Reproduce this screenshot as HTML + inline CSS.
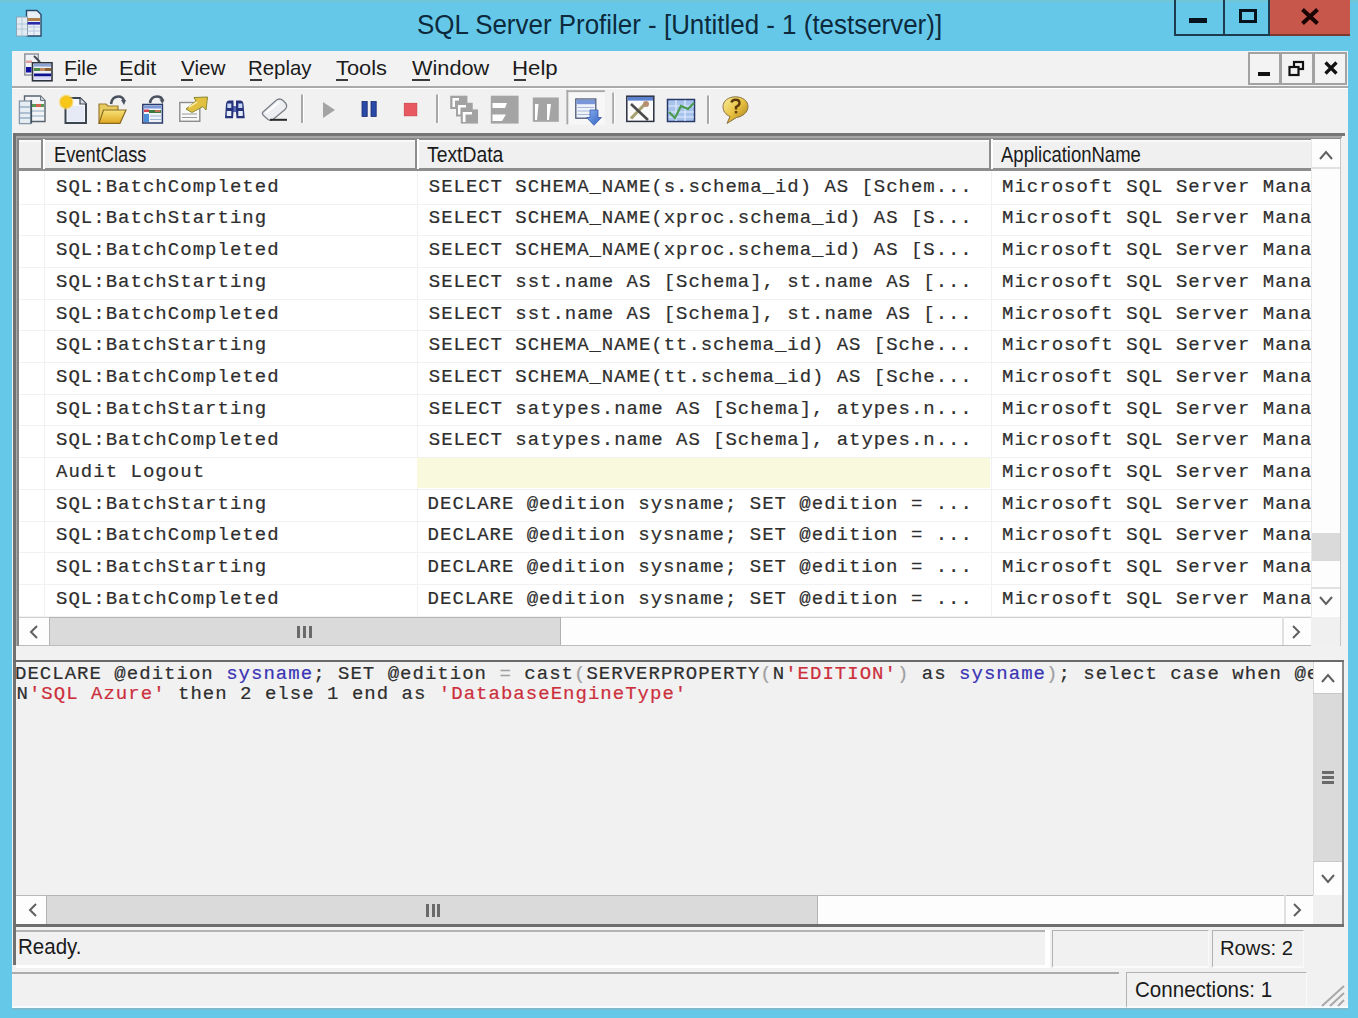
<!DOCTYPE html>
<html><head><meta charset="utf-8">
<style>
*{margin:0;padding:0;box-sizing:border-box}
html,body{width:1358px;height:1018px;overflow:hidden}
body{background:#66c8e9;font-family:"Liberation Sans",sans-serif;position:relative}
.a{position:absolute}
.t{white-space:pre;line-height:1;transform-origin:0 0;font-family:"Liberation Sans",sans-serif}
.mono{position:absolute;white-space:pre;line-height:1;font-family:"Liberation Mono",monospace;font-size:19px;letter-spacing:1.02px;color:#2e2e2e;-webkit-text-stroke-width:0.2px}
.kw{color:#3a34b4}.st{color:#cc2f3c}.gy{color:#a0a0a0}
.btn3d{position:absolute;background:#f4f4f4}
</style></head><body>

<div class="a t" style="left:416.78px;top:9.82px;font-size:28.20px;color:#0c2a3c;transform:scaleX(0.9201);">SQL Server Profiler - [Untitled - 1 (testserver)]</div>
<div class="a" style="left:0;top:0;width:1358px;height:1.5px;background:#70c6d6"></div>
<div class="a" style="left:1174px;top:0;width:51px;height:36px;border:2px solid #1d3c50;border-top:none;border-right:none"></div>
<div class="a" style="left:1223px;top:0;width:47px;height:36px;border:2px solid #1d3c50;border-top:none"></div>
<div class="a" style="left:1189px;top:18px;width:18px;height:5px;background:#06121c"></div>
<div class="a" style="left:1239px;top:9px;width:18px;height:14px;border:3.5px solid #06121c"></div>
<div class="a" style="left:1270px;top:0;width:80px;height:36px;background:#c8574b;border-bottom:2px solid #7a3a30"></div>
<svg class="a" style="left:1300px;top:8px" width="20" height="17" viewBox="0 0 20 17"><path d="M2.5 1.5 L17.5 15.5 M17.5 1.5 L2.5 15.5" stroke="#1a0505" stroke-width="4"/></svg>
<div class="a" style="left:12px;top:51px;width:1336px;height:957px;background:#f1f1f1"></div>
<div class="a" style="left:12px;top:1006px;width:1336px;height:2px;background:#f6fcfe"></div>
<div class="a" style="left:12px;top:1008px;width:1336px;height:2px;background:#7cbacd"></div>
<div class="a" style="left:12px;top:51px;width:1336px;height:35px;background:#f2f2f2"></div>
<div class="a" style="left:12px;top:86px;width:1336px;height:1.6px;background:#a9a9a9"></div>
<div class="a" style="left:12px;top:88px;width:1336px;height:1px;background:#ffffff"></div>
<div class="a t" style="left:63.71px;top:58.08px;font-size:20.93px;color:#1b1b1b;transform:scaleX(0.9968);">File</div>
<div class="a t" style="left:119.24px;top:58.08px;font-size:20.93px;color:#1b1b1b;transform:scaleX(1.0324);">Edit</div>
<div class="a t" style="left:181.00px;top:58.08px;font-size:20.93px;color:#1b1b1b;transform:scaleX(0.9889);">View</div>
<div class="a t" style="left:248.05px;top:58.08px;font-size:20.93px;color:#1b1b1b;transform:scaleX(0.9746);">Replay</div>
<div class="a t" style="left:336.40px;top:58.08px;font-size:20.93px;color:#1b1b1b;transform:scaleX(1.0438);">Tools</div>
<div class="a t" style="left:412.30px;top:58.08px;font-size:20.93px;color:#1b1b1b;transform:scaleX(1.0378);">Window</div>
<div class="a t" style="left:512.08px;top:58.08px;font-size:20.93px;color:#1b1b1b;transform:scaleX(1.0625);">Help</div>
<div class="a" style="left:66px;top:79px;width:11px;height:2px;background:#3a3a3a"></div>
<div class="a" style="left:121px;top:79px;width:11px;height:2px;background:#3a3a3a"></div>
<div class="a" style="left:181px;top:79px;width:12px;height:2px;background:#3a3a3a"></div>
<div class="a" style="left:250px;top:79px;width:12px;height:2px;background:#3a3a3a"></div>
<div class="a" style="left:336px;top:79px;width:12px;height:2px;background:#3a3a3a"></div>
<div class="a" style="left:412px;top:79px;width:18px;height:2px;background:#3a3a3a"></div>
<div class="a" style="left:514px;top:79px;width:12px;height:2px;background:#3a3a3a"></div>
<div class="a" style="left:1248px;top:52px;width:33px;height:33px;background:#f3f3f3;border:2px solid #a2a2a2"></div>
<div class="a" style="left:1280px;top:52px;width:34px;height:33px;background:#f3f3f3;border:2px solid #a2a2a2"></div>
<div class="a" style="left:1313px;top:52px;width:34px;height:33px;background:#f3f3f3;border:2px solid #a2a2a2"></div>
<div class="a" style="left:1258px;top:72px;width:12px;height:4px;background:#111"></div>
<svg class="a" style="left:1287px;top:60px" width="20" height="18" viewBox="0 0 20 18"><rect x="7" y="2" width="9" height="7" fill="none" stroke="#111" stroke-width="2.2"/><rect x="2.5" y="7" width="9" height="8" fill="#f3f3f3" stroke="#111" stroke-width="2.2"/></svg>
<svg class="a" style="left:1320px;top:60px" width="20" height="16" viewBox="0 0 20 16"><path d="M5.5 2.5 L16.5 13.5 M16.5 2.5 L5.5 13.5" stroke="#111" stroke-width="3.2"/></svg>
<svg class="a" style="left:0;top:0" width="760" height="132" viewBox="0 0 760 132">
<defs>
<linearGradient id="gfold" x1="0" y1="0" x2="0" y2="1"><stop offset="0" stop-color="#f6e27a"/><stop offset="1" stop-color="#e0a820"/></linearGradient>
<linearGradient id="gbub" x1="0" y1="0" x2="1" y2="1"><stop offset="0" stop-color="#f8f0a0"/><stop offset="0.5" stop-color="#e8c040"/><stop offset="1" stop-color="#a07818"/></linearGradient>
<radialGradient id="gstar"><stop offset="0" stop-color="#ffd000"/><stop offset="0.7" stop-color="#f5c020"/><stop offset="1" stop-color="#f8e890" stop-opacity="0.3"/></radialGradient>
<linearGradient id="garr" x1="0" y1="0" x2="1" y2="1"><stop offset="0" stop-color="#8ab0f0"/><stop offset="1" stop-color="#3060c0"/></linearGradient>
<linearGradient id="gtitle" x1="0" y1="0" x2="1" y2="1"><stop offset="0" stop-color="#ffffff"/><stop offset="1" stop-color="#c8d4e0"/></linearGradient>
</defs>
<!-- title icon -->
<path d="M26.5 10.5 H37 L41 14.5 V36 H26.5 Z" fill="#e8f0f6" stroke="#2a4868" stroke-width="1.4"/>
<rect x="16.5" y="17" width="11" height="19" fill="#e2ebf2" stroke="#8aa4b8" stroke-width="1"/>
<path d="M17 24 H27 M17 29 H27 M22 18 V35" stroke="#a8c0d0" stroke-width="0.8"/>
<rect x="27.5" y="18" width="12.5" height="3" fill="#b08048"/>
<rect x="27.5" y="22" width="12.5" height="2.6" fill="#2a2aa8"/>
<path d="M28 27 H40 M28 31 H40 M34 25 V35" stroke="#b8c8e0" stroke-width="1"/>
<!-- menu icon -->
<rect x="24.8" y="54" width="13.5" height="21" fill="#f0f2f4" stroke="#8a9098" stroke-width="1.4"/>
<rect x="26" y="60.5" width="6" height="2.5" fill="#e0a0a0"/>
<rect x="26" y="67" width="5.5" height="5.5" fill="#1010a0"/>
<path d="M34 56 L40 62" stroke="#404850" stroke-width="2"/>
<rect x="32.5" y="62.8" width="19.5" height="18" fill="#eef0f8" stroke="#30343c" stroke-width="1.6"/>
<rect x="33.5" y="63.6" width="17.5" height="3" fill="#8ea4d0"/>
<rect x="34" y="68" width="6" height="3" fill="#4a8a40"/><rect x="40" y="68" width="5" height="3" fill="#c08860"/><rect x="45" y="68" width="6" height="3" fill="#8a6030"/>
<rect x="34" y="73.5" width="17" height="2.8" fill="#101090"/>
<rect x="34" y="77" width="17" height="2.5" fill="#d8d8f8"/>
<!-- tb1 -->
<path d="M24.5 96 H40.5 L45 100.5 V121.5 H24.5 Z" fill="#f2f4f6" stroke="#5a6470" stroke-width="1.4"/>
<path d="M40.5 96 V100.5 H45" fill="#c8d0d8" stroke="#6a7480" stroke-width="1"/>
<rect x="30" y="104" width="14" height="3" fill="#5a9a50"/><rect x="36" y="104" width="5" height="3" fill="#d86050"/>
<path d="M31 111 H44 M31 116 H44" stroke="#90a8c0" stroke-width="1.2"/>
<rect x="19.4" y="101" width="11.4" height="22.6" fill="#e6eef4" stroke="#8898a8" stroke-width="1.3"/>
<path d="M20 107 H30 M20 113 H30 M20 118 H30" stroke="#98b0c4" stroke-width="1.3"/>
<rect x="30.5" y="100" width="1.6" height="23.5" fill="#40505c"/>
<!-- tb2 new -->
<path d="M65.5 98 H80 L86 104 V123 H65.5 Z" fill="#f6f8fc" stroke="#3c4650" stroke-width="2"/>
<path d="M80 98 V104 H86" fill="#d8dde4" stroke="#3c4650" stroke-width="1.2"/>
<rect x="67.5" y="106" width="16.5" height="15.5" fill="#e6eaf6"/>
<circle cx="66.2" cy="102" r="7.8" fill="url(#gstar)"/>
<path d="M66.2 95 L67.6 99.5 L72.5 98.5 L69 102 L72.5 105.5 L67.6 104.5 L66.2 109 L64.8 104.5 L60 105.5 L63.4 102 L60 98.5 L64.8 99.5 Z" fill="#f8c818"/>
<!-- tb3 folder -->
<path d="M111 104 Q112 96.5 118.5 96.5 Q123 96.5 124 101" fill="none" stroke="#4a5260" stroke-width="2.6"/>
<path d="M121 100 L126 100 L124 105 Z" fill="#4a5260"/>
<path d="M99 104 H106 L108 106 H118 V123 H99 Z" fill="#e8cc60" stroke="#9a7a30" stroke-width="1.2"/>
<path d="M103.5 110 H126 L120 123.3 H99 Z" fill="url(#gfold)" stroke="#8a6a20" stroke-width="1.2"/>
<!-- tb4 doc arrow -->
<path d="M150 103 Q151 96.5 157 96.5 Q161.5 96.5 162.5 100" fill="none" stroke="#4a5260" stroke-width="2.6"/>
<path d="M159.5 99.5 L164.5 99.5 L162.5 104 Z" fill="#4a5260"/>
<rect x="142.8" y="104.5" width="19.6" height="18.5" fill="#f0f2f8" stroke="#2a3a6a" stroke-width="1.5"/>
<rect x="144" y="105.5" width="17.5" height="3" fill="#7a98d8"/>
<rect x="144" y="109.5" width="5" height="2.5" fill="#d04050"/><rect x="149" y="110" width="12" height="3" fill="#3a7a40"/><rect x="155" y="110" width="5" height="2" fill="#c07050"/>
<rect x="144" y="114" width="5" height="8" fill="#4a90d8"/>
<path d="M150 116 H161 M150 119.5 H161" stroke="#a0b8d8" stroke-width="1.2"/>
<!-- tb5 export -->
<rect x="179.8" y="102.5" width="20" height="18.8" fill="#f8f8f8" stroke="#8c8c8c" stroke-width="1.4"/>
<path d="M182 114 H197 M182 117.5 H197" stroke="#9a9a9a" stroke-width="1.2"/>
<path d="M186 109 L196 101 L194 97.5 L207.5 97 L206 110 L203 106.5 L192 112.5 Z" fill="#e2c040" stroke="#8a8a30" stroke-width="1"/>
<path d="M189 107 L197 102" stroke="#f8e8a0" stroke-width="1.5"/>
<!-- tb6 binoculars -->
<path d="M225 118.3 L226 104 Q226.5 100.6 229.5 100.6 H233.5 V106 H236 V100.6 H240 Q243 100.6 243.5 104 L244.7 118.3 H236.5 L236 112 H233.5 L233 118.3 Z" fill="#26337a"/>
<rect x="227.3" y="103.5" width="4" height="4.5" fill="#c8d8f4"/><rect x="238.3" y="103.5" width="4" height="4.5" fill="#c8d8f4"/>
<rect x="226.8" y="111" width="4.5" height="5" fill="#e4ecfc"/><rect x="238.3" y="111" width="4.5" height="5" fill="#e4ecfc"/>
<rect x="233.5" y="106" width="2.5" height="6" fill="#5a6ab8"/>
<!-- tb7 eraser -->
<path d="M263 112 L276 100.5 Q279.5 97.5 283 100.5 L285.5 103 Q288 106.5 285 109.5 L273 119.5 Q270.5 121 268 119.5 L263.5 115.5 Q261.5 113.5 263 112 Z" fill="#eceef2" stroke="#7a7e86" stroke-width="1.3"/>
<path d="M266 113 L279 102" stroke="#ffffff" stroke-width="2"/>
<path d="M270 119.8 H287" stroke="#2a2a2a" stroke-width="2"/>
<!-- seps -->
<rect x="301" y="94.5" width="2" height="28.5" fill="#a8a8a8"/><rect x="303" y="94.5" width="1" height="28.5" fill="#fff"/>
<rect x="436" y="94.5" width="2" height="28.5" fill="#a8a8a8"/><rect x="438" y="94.5" width="1" height="28.5" fill="#fff"/>
<rect x="612.2" y="92.6" width="2" height="31" fill="#a8a8a8"/><rect x="614.2" y="92.6" width="1" height="31" fill="#fff"/>
<rect x="707" y="95.5" width="2" height="28.3" fill="#a8a8a8"/><rect x="709" y="95.5" width="1" height="28.3" fill="#fff"/>
<!-- play pause stop -->
<path d="M323 102 L335 110 L323 118 Z" fill="#a4a4a4"/>
<rect x="362" y="101.5" width="5.2" height="15" fill="#2a4aa8" stroke="#1a2a70" stroke-width="0.8"/>
<rect x="371" y="101.5" width="5.2" height="15" fill="#2a4aa8" stroke="#1a2a70" stroke-width="0.8"/>
<rect x="404.3" y="103.3" width="12.5" height="12.5" fill="#e85860" stroke="#d04048" stroke-width="0.8"/>
<!-- cascade -->
<rect x="450.2" y="95.7" width="17.2" height="13.3" fill="#a2a2a2"/><path d="M452.5 98 H459 V100.5 H455 V107 H452.5 Z" fill="#fff"/>
<rect x="456" y="102.8" width="16.7" height="13.7" fill="#a2a2a2"/><path d="M458 105 H466 V107.5 H460.5 V114.5 H458 Z" fill="#fff"/>
<rect x="460.8" y="109.4" width="17.2" height="14.2" fill="#a2a2a2"/><path d="M462.8 112 H472 V114.5 H465.5 V122 H462.8 Z" fill="#fff"/>
<!-- tile h -->
<rect x="490.8" y="95.7" width="27.8" height="27.9" fill="#a4a4a4"/>
<path d="M492.5 103 H507 L505 108 H492.5 Z" fill="#fff"/>
<path d="M492.5 114.5 H506 L502 121 H492.5 Z" fill="#fff"/>
<!-- tile v -->
<rect x="532.8" y="97.5" width="26" height="24.3" fill="#a4a4a4"/>
<path d="M535 104 H538.5 L537 120 H535 Z" fill="#fff"/>
<path d="M547 104 H551 L549 120 H547 Z" fill="#fff"/>
<!-- pressed btn -->
<rect x="566.4" y="90.2" width="38.5" height="34.5" fill="#f7f7f7"/>
<rect x="566.4" y="90.2" width="38.5" height="1.9" fill="#a8a8a8"/>
<rect x="566.4" y="90.2" width="1.9" height="34.2" fill="#a8a8a8"/>
<rect x="575.8" y="99" width="20" height="19.2" fill="#eef2fa" stroke="#404a68" stroke-width="1.2"/>
<rect x="576.4" y="99.6" width="18.8" height="4.6" fill="#7896d8"/>
<path d="M577.5 107.5 H594 M577.5 111 H594 M577.5 114.5 H594" stroke="#a8b8d8" stroke-width="1"/>
<path d="M590 110 H598 V117.5 H601.5 L594 125.3 L586.5 117.5 H590 Z" fill="url(#garr)" stroke="#3a5ab0" stroke-width="0.8"/>
<!-- tools -->
<rect x="626.8" y="96.2" width="27" height="25.2" fill="#fafafa" stroke="#2a3040" stroke-width="1.5"/>
<rect x="627.6" y="97" width="25.4" height="3.6" fill="#5a80d0"/>
<path d="M631 118.5 L645 104" stroke="#a8a070" stroke-width="3.2"/>
<circle cx="646" cy="104" r="3" fill="#b89070"/>
<path d="M631 104 L648 120" stroke="#4a4a4a" stroke-width="2.6"/>
<!-- chart -->
<rect x="667.5" y="99.5" width="27" height="22" fill="#a8c4ec" stroke="#283868" stroke-width="1.5"/>
<path d="M668.5 106 H694 M668.5 112 H694 M668.5 117 H694 M676 100 V121 M685 100 V121" stroke="#e0ecff" stroke-width="1.2"/>
<path d="M669 112 L675 118 L681 106 L688 109 L694 103" fill="none" stroke="#4a9a50" stroke-width="2.2"/>
<!-- help -->
<path d="M735.5 96.8 C742.5 96.8 748 101 748 106.5 C748 112 743 116.5 736.5 117.5 L727 123.4 L730 116.5 C725.5 114.5 723 111 723 106.5 C723 101 728.5 96.8 735.5 96.8 Z" fill="url(#gbub)" stroke="#8a7040" stroke-width="1"/>
<path d="M731.5 102.5 Q732 99.8 735.5 99.8 Q739.5 99.8 739.5 103 Q739.5 105.5 736 107 V109.5" fill="none" stroke="#5a3a08" stroke-width="2.4"/>
<rect x="734.7" y="111" width="2.6" height="2.4" fill="#6a4010"/>
</svg>
<div class="a" style="left:14px;top:133px;width:1327px;height:513px;background:#ffffff"></div>
<div class="a" style="left:12.5px;top:132.8px;width:1332px;height:3.2px;background:#767676"></div>
<div class="a" style="left:15.5px;top:136px;width:1326px;height:2px;background:#a6a6a6"></div>
<div class="a" style="left:16.8px;top:138px;width:1324px;height:1.5px;background:#8a8a8a"></div>
<div class="a" style="left:12.5px;top:132.8px;width:3px;height:832px;background:#707070"></div>
<div class="a" style="left:15.5px;top:136px;width:1.3px;height:510px;background:#a8a8a8"></div>
<div class="a" style="left:16.8px;top:138px;width:2.2px;height:508px;background:#858585"></div>
<div class="a" style="left:1339.2px;top:139px;width:1.8px;height:507px;background:#c6c6c6"></div>
<div class="a" style="left:19px;top:139.5px;width:1292px;height:29px;background:#f0f0f0"></div>
<div class="a" style="left:19px;top:139.5px;width:1292px;height:2px;background:#fafafa"></div>
<div class="a" style="left:19px;top:168.3px;width:1292px;height:2.7px;background:#8d8d8d"></div>
<div class="a" style="left:41px;top:139px;width:2.3px;height:31px;background:#8d8d8d"></div>
<div class="a" style="left:43.3px;top:139px;width:2px;height:30px;background:#ffffff"></div>
<div class="a" style="left:414.5px;top:139px;width:2.3px;height:31px;background:#8d8d8d"></div>
<div class="a" style="left:416.8px;top:139px;width:2px;height:30px;background:#ffffff"></div>
<div class="a" style="left:989px;top:139px;width:2.3px;height:31px;background:#8d8d8d"></div>
<div class="a" style="left:991.3px;top:139px;width:2px;height:30px;background:#ffffff"></div>
<div class="a t" style="left:53.78px;top:143.83px;font-size:21.22px;color:#1a1a1a;transform:scaleX(0.8619);">EventClass</div>
<div class="a t" style="left:427.00px;top:143.83px;font-size:21.22px;color:#1a1a1a;transform:scaleX(0.9119);">TextData</div>
<div class="a t" style="left:1001.30px;top:143.83px;font-size:21.22px;color:#1a1a1a;transform:scaleX(0.8719);">ApplicationName</div>
<div class="a" style="left:19px;top:203.5px;width:1292px;height:1px;background:#f2f2f2"></div>
<div class="a" style="left:19px;top:235.2px;width:1292px;height:1px;background:#f2f2f2"></div>
<div class="a" style="left:19px;top:266.9px;width:1292px;height:1px;background:#f2f2f2"></div>
<div class="a" style="left:19px;top:298.6px;width:1292px;height:1px;background:#f2f2f2"></div>
<div class="a" style="left:19px;top:330.3px;width:1292px;height:1px;background:#f2f2f2"></div>
<div class="a" style="left:19px;top:362.0px;width:1292px;height:1px;background:#f2f2f2"></div>
<div class="a" style="left:19px;top:393.7px;width:1292px;height:1px;background:#f2f2f2"></div>
<div class="a" style="left:19px;top:425.4px;width:1292px;height:1px;background:#f2f2f2"></div>
<div class="a" style="left:19px;top:457.1px;width:1292px;height:1px;background:#f2f2f2"></div>
<div class="a" style="left:19px;top:488.8px;width:1292px;height:1px;background:#f2f2f2"></div>
<div class="a" style="left:19px;top:520.5px;width:1292px;height:1px;background:#f2f2f2"></div>
<div class="a" style="left:19px;top:552.2px;width:1292px;height:1px;background:#f2f2f2"></div>
<div class="a" style="left:19px;top:583.9px;width:1292px;height:1px;background:#f2f2f2"></div>
<div class="a" style="left:19px;top:615.6px;width:1292px;height:1px;background:#f2f2f2"></div>
<div class="a" style="left:44px;top:171px;width:1px;height:446px;background:#f1f1f1"></div>
<div class="a" style="left:417px;top:171px;width:1px;height:446px;background:#f1f1f1"></div>
<div class="a" style="left:991px;top:171px;width:1px;height:446px;background:#f1f1f1"></div>
<div class="a" style="left:417px;top:457.8px;width:573px;height:30.7px;background:#f9f9de"></div>
<div class="mono" style="left:56px;top:177.74px">SQL:BatchCompleted</div>
<div class="mono" style="left:428.8px;top:177.74px;letter-spacing:0.96px">SELECT SCHEMA_NAME(s.schema_id) AS [Schem...</div>
<div class="mono" style="left:1002px;top:177.74px;width:309px;overflow:hidden">Microsoft SQL Server Mana</div>
<div class="mono" style="left:56px;top:209.44px">SQL:BatchStarting</div>
<div class="mono" style="left:428.8px;top:209.44px;letter-spacing:0.96px">SELECT SCHEMA_NAME(xproc.schema_id) AS [S...</div>
<div class="mono" style="left:1002px;top:209.44px;width:309px;overflow:hidden">Microsoft SQL Server Mana</div>
<div class="mono" style="left:56px;top:241.14px">SQL:BatchCompleted</div>
<div class="mono" style="left:428.8px;top:241.14px;letter-spacing:0.96px">SELECT SCHEMA_NAME(xproc.schema_id) AS [S...</div>
<div class="mono" style="left:1002px;top:241.14px;width:309px;overflow:hidden">Microsoft SQL Server Mana</div>
<div class="mono" style="left:56px;top:272.84px">SQL:BatchStarting</div>
<div class="mono" style="left:428.8px;top:272.84px;letter-spacing:0.96px">SELECT sst.name AS [Schema], st.name AS [...</div>
<div class="mono" style="left:1002px;top:272.84px;width:309px;overflow:hidden">Microsoft SQL Server Mana</div>
<div class="mono" style="left:56px;top:304.54px">SQL:BatchCompleted</div>
<div class="mono" style="left:428.8px;top:304.54px;letter-spacing:0.96px">SELECT sst.name AS [Schema], st.name AS [...</div>
<div class="mono" style="left:1002px;top:304.54px;width:309px;overflow:hidden">Microsoft SQL Server Mana</div>
<div class="mono" style="left:56px;top:336.24px">SQL:BatchStarting</div>
<div class="mono" style="left:428.8px;top:336.24px;letter-spacing:0.96px">SELECT SCHEMA_NAME(tt.schema_id) AS [Sche...</div>
<div class="mono" style="left:1002px;top:336.24px;width:309px;overflow:hidden">Microsoft SQL Server Mana</div>
<div class="mono" style="left:56px;top:367.94px">SQL:BatchCompleted</div>
<div class="mono" style="left:428.8px;top:367.94px;letter-spacing:0.96px">SELECT SCHEMA_NAME(tt.schema_id) AS [Sche...</div>
<div class="mono" style="left:1002px;top:367.94px;width:309px;overflow:hidden">Microsoft SQL Server Mana</div>
<div class="mono" style="left:56px;top:399.64px">SQL:BatchStarting</div>
<div class="mono" style="left:428.8px;top:399.64px;letter-spacing:0.96px">SELECT satypes.name AS [Schema], atypes.n...</div>
<div class="mono" style="left:1002px;top:399.64px;width:309px;overflow:hidden">Microsoft SQL Server Mana</div>
<div class="mono" style="left:56px;top:431.34px">SQL:BatchCompleted</div>
<div class="mono" style="left:428.8px;top:431.34px;letter-spacing:0.96px">SELECT satypes.name AS [Schema], atypes.n...</div>
<div class="mono" style="left:1002px;top:431.34px;width:309px;overflow:hidden">Microsoft SQL Server Mana</div>
<div class="mono" style="left:56px;top:463.04px">Audit Logout</div>
<div class="mono" style="left:1002px;top:463.04px;width:309px;overflow:hidden">Microsoft SQL Server Mana</div>
<div class="mono" style="left:56px;top:494.74px">SQL:BatchStarting</div>
<div class="mono" style="left:427.6px;top:494.74px;letter-spacing:0.99px">DECLARE @edition sysname; SET @edition = ...</div>
<div class="mono" style="left:1002px;top:494.74px;width:309px;overflow:hidden">Microsoft SQL Server Mana</div>
<div class="mono" style="left:56px;top:526.44px">SQL:BatchCompleted</div>
<div class="mono" style="left:427.6px;top:526.44px;letter-spacing:0.99px">DECLARE @edition sysname; SET @edition = ...</div>
<div class="mono" style="left:1002px;top:526.44px;width:309px;overflow:hidden">Microsoft SQL Server Mana</div>
<div class="mono" style="left:56px;top:558.14px">SQL:BatchStarting</div>
<div class="mono" style="left:427.6px;top:558.14px;letter-spacing:0.99px">DECLARE @edition sysname; SET @edition = ...</div>
<div class="mono" style="left:1002px;top:558.14px;width:309px;overflow:hidden">Microsoft SQL Server Mana</div>
<div class="mono" style="left:56px;top:589.84px">SQL:BatchCompleted</div>
<div class="mono" style="left:427.6px;top:589.84px;letter-spacing:0.99px">DECLARE @edition sysname; SET @edition = ...</div>
<div class="mono" style="left:1002px;top:589.84px;width:309px;overflow:hidden">Microsoft SQL Server Mana</div>
<div class="a" style="left:1311px;top:139px;width:29px;height:478px;background:#fdfdfd;border-left:1px solid #e8e8e8"></div>
<div class="a" style="left:1311px;top:167px;width:29px;height:1.5px;background:#e2e2e2"></div>
<svg class="a" style="left:1318px;top:149px" width="16" height="12" viewBox="0 0 16 12"><path d="M2 10 L8 3 L14 10" fill="none" stroke="#606060" stroke-width="2"/></svg>
<div class="a" style="left:1312px;top:533px;width:28px;height:28px;background:#dadada"></div>
<div class="a" style="left:1311px;top:587px;width:29px;height:1.5px;background:#e2e2e2"></div>
<svg class="a" style="left:1318px;top:595px" width="16" height="12" viewBox="0 0 16 12"><path d="M2 2 L8 9 L14 2" fill="none" stroke="#606060" stroke-width="2"/></svg>
<div class="a" style="left:19px;top:617px;width:1321px;height:29px;background:#fdfdfd;border-top:1px solid #d0d0d0"></div>
<div class="a" style="left:49px;top:617px;width:512px;height:29px;background:#dadada;border:1px solid #b4b4b4;border-right:1.5px solid #b0b0b0"></div>
<svg class="a" style="left:28px;top:624px" width="12" height="16" viewBox="0 0 12 16"><path d="M9 2 L3 8 L9 14" fill="none" stroke="#606060" stroke-width="2"/></svg>
<div class="a" style="left:297px;top:626px;width:3px;height:12px;background:#6a6a6a"></div>
<div class="a" style="left:303px;top:626px;width:3px;height:12px;background:#6a6a6a"></div>
<div class="a" style="left:309px;top:626px;width:3px;height:12px;background:#6a6a6a"></div>
<div class="a" style="left:1282px;top:617px;width:1.5px;height:29px;background:#e0e0e0"></div>
<svg class="a" style="left:1290px;top:624px" width="12" height="16" viewBox="0 0 12 16"><path d="M3 2 L9 8 L3 14" fill="none" stroke="#606060" stroke-width="2"/></svg>
<div class="a" style="left:1311px;top:617px;width:29px;height:29px;background:#f0f0f0"></div>
<div class="a" style="left:19px;top:645.3px;width:1292px;height:1.2px;background:#bcbcbc"></div>
<div class="a" style="left:12.5px;top:659.5px;width:1331px;height:2.5px;background:#6a6a6a"></div>
<div class="a" style="left:1342px;top:662px;width:2px;height:265px;background:#8a8a8a"></div>
<div class="mono" style="left:15px;top:664.94px">DECLARE @edition <span class="kw">sysname</span>; SET @edition <span class="gy">=</span> cast<span class="gy">(</span>SERVERPROPERTY<span class="gy">(</span>N<span class="st">'EDITION'</span><span class="gy">)</span> as <span class="kw">sysname</span><span class="gy">)</span>; select case when @e</div>
<div class="mono" style="left:16.5px;top:684.84px">N<span class="st">'SQL Azure'</span> then 2 else 1 end as <span class="st">'DatabaseEngineType'</span></div>
<div class="a" style="left:1313px;top:662px;width:29px;height:233px;background:#fdfdfd;border-left:1px solid #d8d8d8"></div>
<div class="a" style="left:1313px;top:693px;width:29px;height:169px;background:#dadada;border-top:1px solid #c8c8c8;border-bottom:1px solid #c8c8c8"></div>
<svg class="a" style="left:1320px;top:672px" width="16" height="12" viewBox="0 0 16 12"><path d="M2 10 L8 3 L14 10" fill="none" stroke="#606060" stroke-width="2"/></svg>
<svg class="a" style="left:1320px;top:873px" width="16" height="12" viewBox="0 0 16 12"><path d="M2 2 L8 9 L14 2" fill="none" stroke="#606060" stroke-width="2"/></svg>
<div class="a" style="left:1322px;top:771px;width:12px;height:2.5px;background:#6a6a6a"></div>
<div class="a" style="left:1322px;top:776px;width:12px;height:2.5px;background:#6a6a6a"></div>
<div class="a" style="left:1322px;top:781px;width:12px;height:2.5px;background:#6a6a6a"></div>
<div class="a" style="left:15.5px;top:895px;width:1326.5px;height:30px;background:#fdfdfd;border-top:1px solid #b8b8b8"></div>
<div class="a" style="left:46px;top:895px;width:772px;height:30px;background:#dadada;border:1px solid #b4b4b4"></div>
<svg class="a" style="left:27px;top:902px" width="12" height="16" viewBox="0 0 12 16"><path d="M9 2 L3 8 L9 14" fill="none" stroke="#606060" stroke-width="2"/></svg>
<div class="a" style="left:426px;top:904px;width:3px;height:13px;background:#6a6a6a"></div>
<div class="a" style="left:431.5px;top:904px;width:3px;height:13px;background:#6a6a6a"></div>
<div class="a" style="left:437px;top:904px;width:3px;height:13px;background:#6a6a6a"></div>
<div class="a" style="left:1284px;top:895px;width:1.5px;height:30px;background:#e0e0e0"></div>
<svg class="a" style="left:1291px;top:902px" width="12" height="16" viewBox="0 0 12 16"><path d="M3 2 L9 8 L3 14" fill="none" stroke="#606060" stroke-width="2"/></svg>
<div class="a" style="left:1313px;top:895px;width:29px;height:30px;background:#f0f0f0"></div>
<div class="a" style="left:14px;top:924px;width:1330px;height:3px;background:#6e6e6e"></div>
<div class="a" style="left:15.5px;top:930px;width:1031.5px;height:1.5px;background:#b2b2b2"></div>
<div class="a" style="left:15.5px;top:965px;width:1031.5px;height:2.5px;background:#ffffff"></div>
<div class="a" style="left:1045px;top:930px;width:5px;height:38px;background:#ffffff"></div>
<div class="a" style="left:1052px;top:930px;width:157px;height:38px;border-top:1.5px solid #b2b2b2;border-left:1.5px solid #b2b2b2;border-right:1.6px solid #fafafa;border-bottom:2.5px solid #fafafa"></div>
<div class="a" style="left:1212px;top:930px;width:92px;height:38px;border-top:1.5px solid #b2b2b2;border-left:1.5px solid #b2b2b2;border-right:1.6px solid #fafafa;border-bottom:2.5px solid #fafafa"></div>
<div class="a" style="left:12px;top:972.3px;width:1107px;height:1.8px;background:#acacac"></div>
<div class="a" style="left:1126px;top:972px;width:181px;height:36px;border-top:1.5px solid #b2b2b2;border-left:1.5px solid #b2b2b2;border-right:1.6px solid #fafafa;border-bottom:2.5px solid #fafafa"></div>
<svg class="a" style="left:1300px;top:984px" width="48" height="24" viewBox="0 0 48 24"><path d="M22 22 L44 2 M30 22 L44 9 M38 22 L44 16" stroke="#a8a8a8" stroke-width="2"/></svg>
<div class="a t" style="left:18.40px;top:936.26px;font-size:21.66px;color:#1b1b1b;transform:scaleX(0.9476);">Ready.</div>
<div class="a t" style="left:1220.08px;top:937.16px;font-size:21.08px;color:#1b1b1b;transform:scaleX(0.9589);">Rows: 2</div>
<div class="a t" style="left:1135.40px;top:977.98px;font-size:22.82px;color:#1b1b1b;transform:scaleX(0.9013);">Connections: 1</div>
</body></html>
